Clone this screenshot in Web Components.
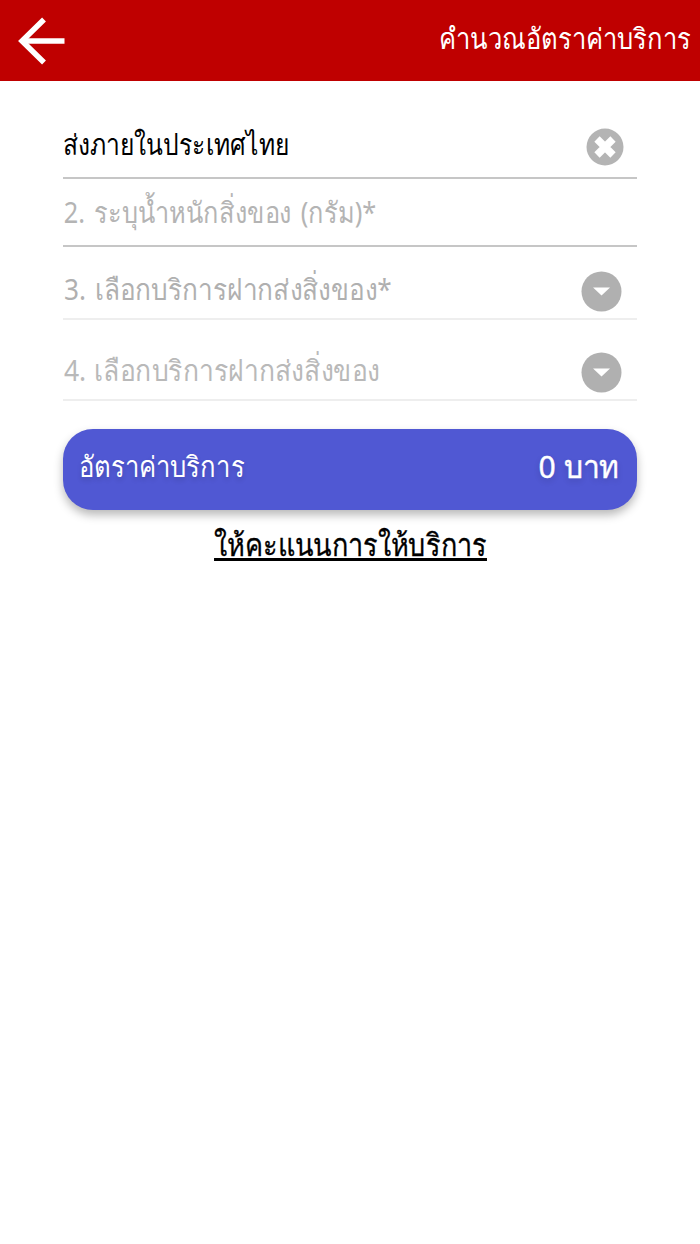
<!DOCTYPE html>
<html lang="th">
<head>
<meta charset="utf-8">
<title>คำนวณอัตราค่าบริการ</title>
<style>
  html, body { margin: 0; padding: 0; background: #fff; }
  body { font-family: "Noto Sans", "Open Sans", sans-serif; }
</style>
</head>
<body>
<calc-page>
  <app-header slot="header">คำนวณอัตราค่าบริการ</app-header>
  <form-row kind="clear" filled height="98" squeeze="0.85">ส่งภายในประเทศไทย</form-row>
  <form-row height="68" squeeze="0.873" gap="3" color="#b4b4b4">2. ระบุน้ำหนักสิ่งของ (กรัม)*</form-row>
  <form-row kind="select" light height="73" squeeze="0.903" gap="2" color="#b0b0b0">3. เลือกบริการฝากส่งสิ่งของ*</form-row>
  <form-row kind="select" light height="81" squeeze="0.914" gap="1" color="#b9b9b9">4. เลือกบริการฝากส่งสิ่งของ</form-row>
  <total-bar amount="0 บาท">อัตราค่าบริการ</total-bar>
  <rate-link>ให้คะแนนการให้บริการ</rate-link>
</calc-page>

<script>
class CalcPage extends HTMLElement {
  constructor() {
    super();
    this.attachShadow({ mode: "open" });
    this.shadowRoot.innerHTML = `
      <style>
        :host { display: block; height: 1244px; background: #fff; }
        .content { display: flex; flex-direction: column; padding: 0 63px; }
      </style>
      <slot name="header"></slot>
      <div class="content"><slot></slot></div>
    `;
  }
}

class AppHeader extends HTMLElement {
  constructor() {
    super();
    this.attachShadow({ mode: "open" });
    this.shadowRoot.innerHTML = `
      <style>
        :host {
          display: flex;
          align-items: center;
          justify-content: space-between;
          height: 81px;
          padding: 0 9px 4px 17px;
          box-sizing: border-box;
          background: #bf0000;
          color: #fff;
          font-size: 29px;
        }
        svg { display: block; margin-top: 4px; }
        .title { display: inline-block; transform: scaleX(0.883); transform-origin: right center; }
      </style>
      <svg width="48" height="48" viewBox="0 0 48 48" fill="none" stroke="#fff" stroke-width="5.500">
        <path d="M47.500 24H5"/>
        <path d="M27 2.500L5 24L27 45.500"/>
      </svg>
      <span class="title"><slot></slot></span>
    `;
  }
}

class FormRow extends HTMLElement {
  constructor() {
    super();
    this.attachShadow({ mode: "open" });
  }

  connectedCallback() {
    const kind = this.getAttribute("kind");
    const filled = this.hasAttribute("filled");
    const light = this.hasAttribute("light");
    const gap = this.getAttribute("gap") || 0;
    let icon = "";
    if (kind === "clear") {
      icon = `<svg class="clear" width="38" height="38" viewBox="0 0 38 38">
        <circle cx="19" cy="19" r="18.500" fill="#b4b4b4"/>
        <path d="M11 11L27 27M27 11L11 27" stroke="#fff" stroke-width="7.500"/>
      </svg>`;
    } else if (kind === "select") {
      icon = `<svg class="select" width="41" height="41" viewBox="0 0 41 41">
        <circle cx="20.500" cy="20.500" r="20" fill="#b0b0b0"/>
        <path d="M12 16.500H29L20.500 24.500Z" fill="#fff"/>
      </svg>`;
    }
    this.shadowRoot.innerHTML = `
      <style>
        :host {
          display: flex;
          align-items: flex-end;
          justify-content: space-between;
          height: ${this.getAttribute("height")}px;
          box-sizing: border-box;
          border-bottom: 2px solid ${light ? "#eeeeee" : "#c6c6c6"};
          color: ${this.getAttribute("color") || "#000"};
          font-size: 29px;
        }
        .label {
          display: inline-block;
          line-height: 40px;
          padding-left: ${filled ? 0 : 1}px;
          padding-bottom: ${light ? 9 : 13}px;
          word-spacing: ${gap}px;
          transform: scaleX(${this.getAttribute("squeeze")});
          transform-origin: left center;
        }
        .clear { margin: 0 13px 11px 0; }
        .select { margin: 0 15px 6px 0; }
      </style>
      <span class="label"><slot></slot></span>
      ${icon}
    `;
  }
}

class TotalBar extends HTMLElement {
  constructor() {
    super();
    this.attachShadow({ mode: "open" });
  }

  connectedCallback() {
    this.shadowRoot.innerHTML = `
      <style>
        :host {
          display: flex;
          align-items: center;
          justify-content: space-between;
          height: 81px;
          margin-top: 28px;
          padding: 0 18px 6px 16px;
          box-sizing: border-box;
          border-radius: 30px;
          background: #5058d3;
          color: #fff;
          font-size: 29px;
          text-shadow: 0 3px 6px rgba(0, 0, 0, 0.16);
          box-shadow: 0 5px 10px rgba(0, 0, 0, 0.28);
        }
        .name { display: inline-block; transform: scaleX(0.886); transform-origin: left center; }
        .amount {
          display: inline-block;
          font-size: 31px;
          -webkit-text-stroke: 0.4px #fff;
          transform: scaleX(0.97);
          transform-origin: right center;
        }
      </style>
      <span class="name"><slot></slot></span>
      <span class="amount">${this.getAttribute("amount")}</span>
    `;
  }
}

class RateLink extends HTMLElement {
  constructor() {
    super();
    this.attachShadow({ mode: "open" });
    this.shadowRoot.innerHTML = `
      <style>
        :host {
          display: block;
          margin-top: 12px;
          text-align: center;
          color: #000;
          font-size: 31px;
          line-height: 44px;
        }
        a {
          display: inline-block;
          color: inherit;
          text-decoration: underline;
          -webkit-text-stroke: 0.3px #000;
          transform: scaleX(0.872);
        }
      </style>
      <a><slot></slot></a>
    `;
  }
}

customElements.define("calc-page", CalcPage);
customElements.define("app-header", AppHeader);
customElements.define("form-row", FormRow);
customElements.define("total-bar", TotalBar);
customElements.define("rate-link", RateLink);
</script>
</body>
</html>
